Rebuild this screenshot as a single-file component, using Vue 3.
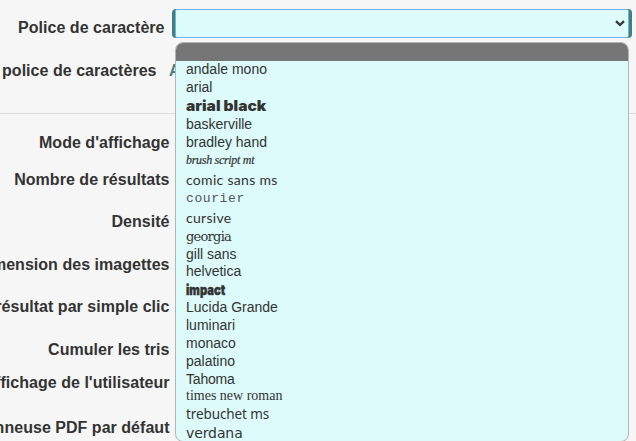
<script setup>
const labels = [
  { text: 'Mode d\'affichage', height: 37 },
  { text: 'Nombre de résultats', height: 42 },
  { text: 'Densité', height: 43 },
  { text: 'mension des imagettes', height: 42 },
  { text: 'résultat par simple clic', height: 43 },
  { text: 'Cumuler les tris', height: 33 },
  { text: 'ffichage de l\'utilisateur', height: 45 },
  { text: 'nneuse PDF par défaut', height: 21 },
]

const options = [
  { text: 'andale mono', height: 18, face: 'sans' },
  { text: 'arial', height: 19, face: 'sans' },
  { text: 'arial black', height: 18, face: 'black' },
  { text: 'baskerville', height: 18, face: 'sans' },
  { text: 'bradley hand', height: 17, face: 'sans' },
  { text: 'brush script mt', height: 21, face: 'brush' },
  { text: 'comic sans ms', height: 17, face: 'comic' },
  { text: 'courier', height: 21, face: 'courier' },
  { text: 'cursive', height: 18, face: 'comic' },
  { text: 'georgia', height: 18, face: 'georgia' },
  { text: 'gill sans', height: 17, face: 'sans' },
  { text: 'helvetica', height: 19, face: 'sans' },
  { text: 'impact', height: 17, face: 'impact' },
  { text: 'Lucida Grande', height: 18, face: 'sans' },
  { text: 'luminari', height: 18, face: 'sans' },
  { text: 'monaco', height: 18, face: 'sans' },
  { text: 'palatino', height: 18, face: 'sans' },
  { text: 'Tahoma', height: 16, face: 'tahoma' },
  { text: 'times new roman', height: 19, face: 'times' },
  { text: 'trebuchet ms', height: 19, face: 'trebuchet' },
  { text: 'verdana', height: 17, face: 'verdana' },
]
</script>

<template>
  <main class="page">
    <section class="fonts">
      <div class="row first">
        <label class="label">Police de caractère</label>
        <div class="select">
          <div class="field">
            <svg class="chevron" width="10" height="7" viewBox="0 0 10 7">
              <path d="M1 1.2 L5 5 L9 1.2" fill="none" stroke="#333" stroke-width="2.3" />
            </svg>
          </div>
        </div>
      </div>
      <div class="row second">
        <label class="label">police de caractères</label>
        <span class="sample">A</span>
      </div>
    </section>
    <section class="settings">
      <div v-for="l in labels" :key="l.text" class="setting" :style="{ height: l.height + 'px' }">
        <label class="label">{{ l.text }}</label>
      </div>
    </section>
    <ul class="menu">
      <li class="blank"></li>
      <li v-for="o in options" :key="o.text" class="option" :style="{ height: o.height + 'px' }">
        <span :class="['face', o.face]">{{ o.text }}</span>
      </li>
    </ul>
  </main>
</template>

<style>
body {
  background: #f6f6f6;
}
</style>

<style scoped>
.page {
  position: relative;
  width: 636px;
  height: 441px;
  overflow: hidden;
  background: #f6f6f6;
  font-family: "Liberation Sans", Arial, sans-serif;
  color: #333;
}
.fonts {
  box-sizing: border-box;
  height: 114px;
  padding-top: 9px;
  border-bottom: 1px solid #ddd;
}
.row {
  display: flex;
}
.label {
  display: flex;
  justify-content: flex-end;
  flex: none;
  white-space: nowrap;
  font-size: 16px;
  font-weight: 700;
  line-height: 20px;
  letter-spacing: 0.03px;
}
.first {
  height: 43px;
}
.first .label {
  width: 164.5px;
  padding: 9px 7.5px 0 0;
}
.select {
  box-sizing: border-box;
  width: 460px;
  height: 29px;
  padding: 0 3px;
  border-radius: 4px;
  background: #44807a;
}
.field {
  box-sizing: border-box;
  display: flex;
  align-items: center;
  justify-content: flex-end;
  height: 29px;
  padding-right: 3px;
  border: 1px solid #70b1f4;
  border-radius: 2px;
  background: #dcfbfa;
}
.second .label {
  width: 156.5px;
  padding: 9px 12.5px 0 0;
}
.sample {
  padding-top: 9px;
  font-size: 16px;
  font-weight: 700;
  line-height: 20px;
  color: #44807a;
}
.settings {
  padding-top: 19px;
}
.setting .label {
  width: 169.5px;
}
.menu {
  position: absolute;
  box-sizing: border-box;
  left: 175px;
  top: 42px;
  width: 454px;
  height: 400px;
  margin: 0;
  padding: 0;
  list-style: none;
  overflow: hidden;
  border: 1px solid #b5b5b5;
  border-radius: 8px;
  background: #dcfbfa;
}
.blank {
  height: 18px;
  margin-bottom: -1px;
  background: #767676;
}
.option {
  padding-left: 10px;
  font-size: 14px;
  line-height: 18px;
  white-space: nowrap;
}
.face {
  display: inline-block;
  line-height: 0;
  transform-origin: 0 0;
}
.black {
  font-family: Inter, sans-serif;
  font-weight: 900;
  transform: scaleX(1.11);
}
.brush {
  font-family: "Liberation Serif", serif;
  font-style: italic;
  font-size: 12px;
  letter-spacing: -0.3px;
  -webkit-text-stroke: 0.2px #333;
}
.comic {
  font-family: Lato, sans-serif;
  letter-spacing: 0.3px;
}
.courier {
  font-family: "Liberation Mono", monospace;
  font-size: 13px;
  letter-spacing: 0.6px;
  color: #555;
}
.georgia {
  font-family: "DejaVu Serif", serif;
  font-size: 13px;
  letter-spacing: -0.75px;
}
.impact {
  font-family: Inter, sans-serif;
  font-weight: 900;
  -webkit-text-stroke: 0.4px #333;
  transform: scaleX(0.8);
}
.tahoma {
  letter-spacing: -0.2px;
}
.times {
  font-family: "Liberation Serif", serif;
}
.trebuchet {
  font-family: "Noto Sans", sans-serif;
  font-size: 13.5px;
  letter-spacing: -0.1px;
}
.verdana {
  font-family: "DejaVu Sans", sans-serif;
  letter-spacing: -0.1px;
}
</style>
